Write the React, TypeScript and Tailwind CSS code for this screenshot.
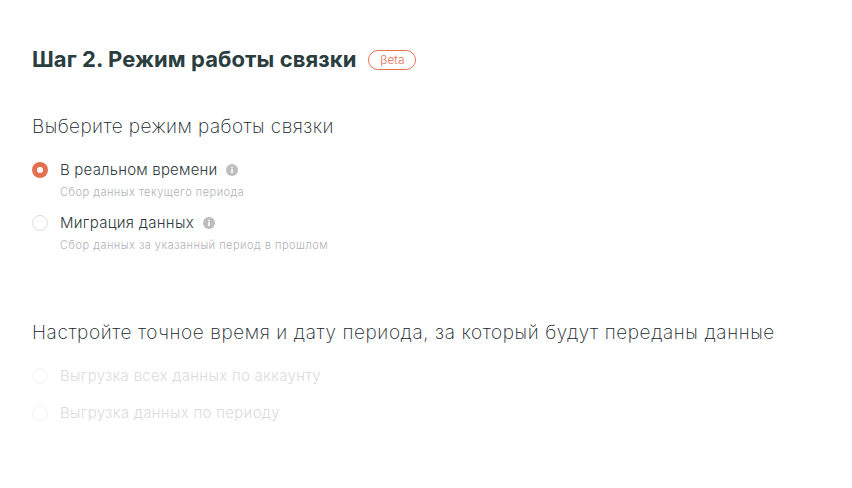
function InfoIcon() {
  return (
    <svg width="12" height="12" viewBox="0 0 12 12" className="shrink-0">
      <circle cx="6" cy="6" r="6" fill="#bdbdbd" />
      <rect x="5.2" y="5" width="1.6" height="4" fill="#fff" />
      <rect x="5.2" y="2.8" width="1.6" height="1.5" fill="#fff" />
    </svg>
  )
}

function Radio({ checked, faded }: { checked?: boolean; faded?: boolean }) {
  if (checked) {
    return (
      <span className="w-4 h-4 rounded-full bg-[#e37151] flex items-center justify-center shrink-0">
        <span className="w-1.5 h-1.5 rounded-full bg-white" />
      </span>
    )
  }
  return (
    <span className={`w-4 h-4 rounded-full border shrink-0 bg-white ${faded ? 'border-[#f3f3f3]' : 'border-[#dedede]'}`} />
  )
}

export default function App() {
  return (
    <div className="w-[852px] h-[488px] bg-white overflow-hidden px-8 pt-[46px] font-['Inter',sans-serif] text-[#2b3a3a]">
      <div className="flex items-center h-7">
        <h1 className="text-[22px] leading-7 font-bold tracking-[0.08px] text-[#2a3d3f] pb-[2px]">Шаг 2. Режим работы связки</h1>
        <span className="ml-3 w-12 h-5 rounded-full border border-[#e37151] text-[#e37151] text-xs font-light flex items-center justify-center">βeta</span>
      </div>

      <h2 className="mt-[41px] text-[19px] leading-6 font-extralight tracking-[0.43px] text-[#16262a]">Выберите режим работы связки</h2>

      <div className="mt-[21px] flex flex-col gap-[14px]">
        <div>
          <div className="flex items-center h-5">
            <Radio checked />
            <span className="ml-3 text-[15px] font-light tracking-[0.2px] text-[#2f3d40]">В реальном времени</span>
            <span className="ml-[9px]"><InfoIcon /></span>
          </div>
          <p className="mt-[5px] ml-7 text-[11px] leading-[14px] font-light tracking-[0.5px] text-[#b0b2b8]">Сбор данных текущего периода</p>
        </div>
        <div>
          <div className="flex items-center h-5">
            <Radio />
            <span className="ml-3 text-[15px] font-light tracking-[0.3px] text-[#2f3d40]">Миграция данных</span>
            <span className="ml-[9px]"><InfoIcon /></span>
          </div>
          <p className="mt-[5px] ml-7 text-[11px] leading-[14px] font-light tracking-[0.5px] text-[#b0b2b8]">Сбор данных за указанный период в прошлом</p>
        </div>
      </div>

      <h2 className="mt-[69px] text-[19px] leading-6 font-extralight tracking-[0.59px] text-[#16262a]">Настройте точное время и дату периода, за который будут переданы данные</h2>

      <div className="mt-[21px] flex flex-col gap-[17px]">
        <div className="flex items-center h-5">
          <Radio faded />
          <span className="ml-3 text-[15px] font-light tracking-[0.28px] text-[#dcdcdc]">Выгрузка всех данных по аккаунту</span>
        </div>
        <div className="flex items-center h-5">
          <Radio faded />
          <span className="ml-3 text-[15px] font-light tracking-[0.3px] text-[#dcdcdc]">Выгрузка данных по периоду</span>
        </div>
      </div>
    </div>
  )
}
